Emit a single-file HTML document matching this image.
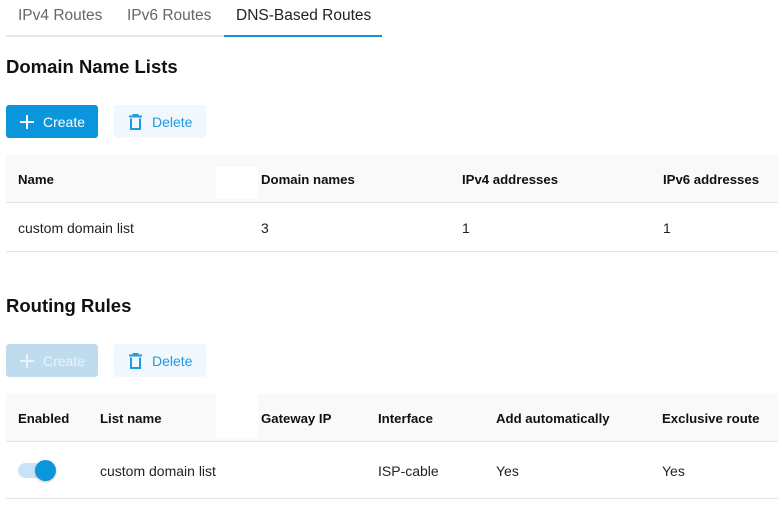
<!DOCTYPE html>
<html><head><style>
*{margin:0;padding:0;box-sizing:border-box}
body{width:782px;height:506px;background:#fff;font-family:"Liberation Sans",Arial,sans-serif;color:#1a1a1a;position:relative;overflow:hidden}
.a{position:absolute;white-space:nowrap}
.tab{font-size:15.5px;color:#666;top:7px}
h2{position:absolute;font-size:18.5px;font-weight:bold;color:#111}
.btn{position:absolute;height:33px;border-radius:3px;font-size:14px;display:flex;align-items:center}
.c{background:#0a96dd;color:#fff;width:92px;left:6px}
.cd{background:#bfdcee;color:#eaf3f9;width:92px;left:6px}
.d{background:#f1f8fd;color:#1d9be0;width:92px;left:114px}
.hd{position:absolute;left:6px;width:772px;height:48px;background:#f9f9f9;border-bottom:1px solid #e3e3e3}
.row{position:absolute;left:6px;width:772px;border-bottom:1px solid #e3e3e3}
.th{font-size:13.2px;font-weight:bold;color:#111}
.td{font-size:14px;color:#222}
</style></head><body>
<div class="a tab" style="left:18px">IPv4 Routes</div>
<div class="a tab" style="left:127px">IPv6 Routes</div>
<div class="a tab" style="left:236px;color:#222">DNS-Based Routes</div>
<div class="a" style="left:6px;top:35px;width:376px;height:2px;background:#e8e8e8"></div>
<div class="a" style="left:224px;top:35px;width:158px;height:2px;background:#1592d6"></div>

<h2 style="left:6px;top:56px">Domain Name Lists</h2>
<div class="btn c" style="top:105px"><svg style="margin:0 9px 0 14px" width="14" height="14"><path d="M7 0V14M0 7H14" stroke="#fff" stroke-width="2"/></svg>Create</div>
<div class="btn d" style="top:105px"><svg style="margin:0 10px 0 15px" width="13" height="16"><path d="M0 2.5H13M4.5 2.5V1H8.5V2.5M2 4.5V15H11V4.5" fill="none" stroke="#1d9be0" stroke-width="2"/></svg>Delete</div>

<div class="hd" style="top:155px"></div>
<div class="a" style="left:216px;top:167px;width:42px;height:32px;background:#fff"></div>
<div class="a th" style="left:18px;top:172px">Name</div>
<div class="a th" style="left:261px;top:172px">Domain names</div>
<div class="a th" style="left:462px;top:172px">IPv4 addresses</div>
<div class="a th" style="left:663px;top:172px">IPv6 addresses</div>
<div class="row" style="top:203px;height:49px"></div>
<div class="a td" style="left:18px;top:220px">custom domain list</div>
<div class="a td" style="left:261px;top:220px">3</div>
<div class="a td" style="left:462px;top:220px">1</div>
<div class="a td" style="left:663px;top:220px">1</div>

<h2 style="left:6px;top:295px">Routing Rules</h2>
<div class="btn cd" style="top:344px"><svg style="margin:0 9px 0 14px" width="14" height="14"><path d="M7 0V14M0 7H14" stroke="#eaf3f9" stroke-width="2"/></svg>Create</div>
<div class="btn d" style="top:344px"><svg style="margin:0 10px 0 15px" width="13" height="16"><path d="M0 2.5H13M4.5 2.5V1H8.5V2.5M2 4.5V15H11V4.5" fill="none" stroke="#1d9be0" stroke-width="2"/></svg>Delete</div>

<div class="hd" style="top:394px"></div>
<div class="a" style="left:216px;top:394px;width:42px;height:44px;background:#fff"></div>
<div class="a th" style="left:18px;top:411px">Enabled</div>
<div class="a th" style="left:100px;top:411px">List name</div>
<div class="a th" style="left:261px;top:411px">Gateway IP</div>
<div class="a th" style="left:378px;top:411px">Interface</div>
<div class="a th" style="left:496px;top:411px">Add automatically</div>
<div class="a th" style="left:662px;top:411px">Exclusive route</div>
<div class="row" style="top:442px;height:57px"></div>
<div class="a" style="left:18px;top:463px;width:32px;height:15px;border-radius:8px;background:#c7e3f5"></div>
<div class="a" style="left:35px;top:460px;width:21px;height:21px;border-radius:50%;background:#0a96dd;box-shadow:0 1px 2px rgba(0,0,0,.25)"></div>
<div class="a td" style="left:100px;top:463px">custom domain list</div>
<div class="a td" style="left:378px;top:463px">ISP-cable</div>
<div class="a td" style="left:496px;top:463px">Yes</div>
<div class="a td" style="left:662px;top:463px">Yes</div>
</body></html>
